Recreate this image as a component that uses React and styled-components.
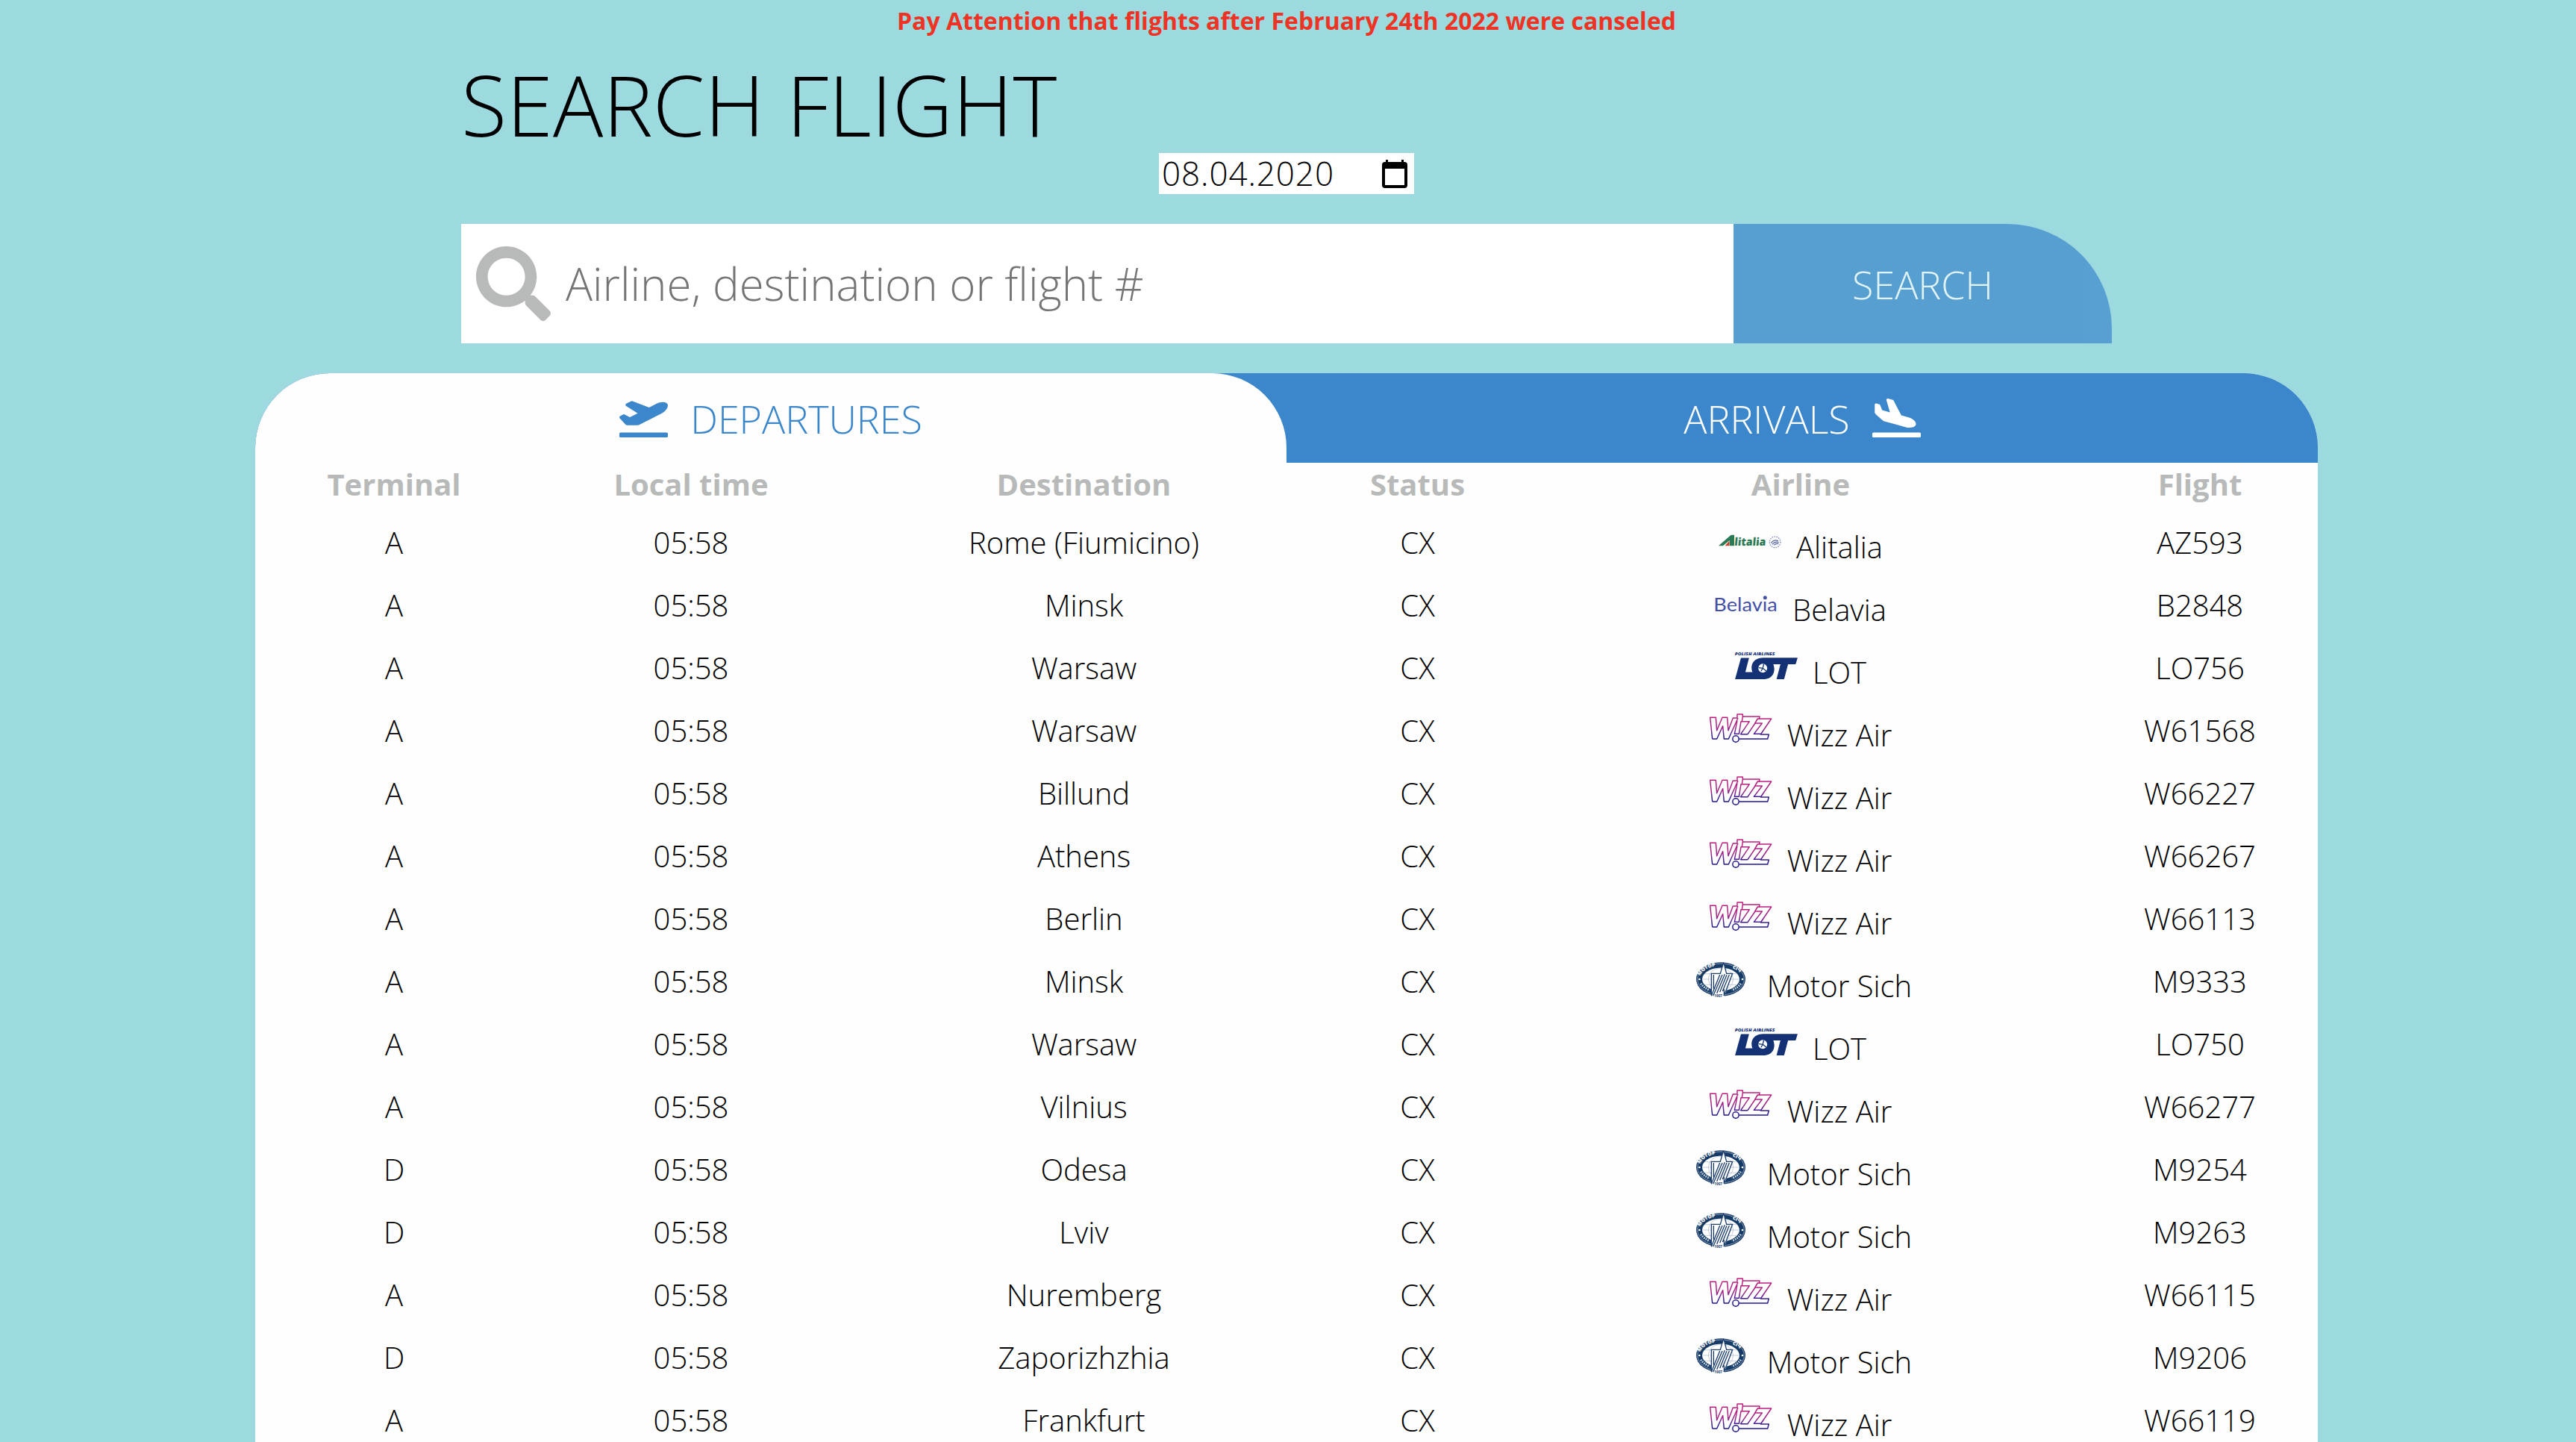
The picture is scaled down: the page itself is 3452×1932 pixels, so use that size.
import React from "react";
import styled, { createGlobalStyle } from "styled-components";
import { FaPlaneArrival, FaPlaneDeparture, FaSearch } from "react-icons/fa";

const GlobalStyle = createGlobalStyle`
  *, *::before, *::after { box-sizing: border-box; }
  body {
    margin: 0;
    background: #9ddae0;
    color: #000;
    font-family: "Open Sans", "Noto Sans", sans-serif;
    font-weight: 300;
  }
`;

const Page = styled.div`
  width: 3448px;
  height: 1932px;
  overflow: hidden;
  display: flex;
  flex-direction: column;
  align-items: center;
`;

const Notice = styled.p`
  margin: 0;
  padding-top: 6px;
  height: 66px;
  flex-shrink: 0;
  color: #ed3424;
  font-size: 32px;
  line-height: 44px;
  font-weight: 700;
  white-space: nowrap;
`;

const SearchSection = styled.section`
  width: 2212px;
  flex-shrink: 0;
  display: flex;
  flex-direction: column;
`;

const Title = styled.h1`
  margin: 0;
  height: 139px;
  font-size: 112px;
  line-height: 147px;
  font-weight: 300;
  white-space: nowrap;
`;

const DateField = styled.div`
  align-self: center;
  width: 342px;
  height: 55px;
  padding: 0 9px 0 4px;
  display: flex;
  align-items: center;
  justify-content: space-between;
  background: #fff;
  font-size: 44px;
  line-height: 55px;
`;

const DateText = styled.span`
  letter-spacing: 0.9px;
`;

const SearchForm = styled.form`
  margin: 40px 0;
  height: 160px;
  display: flex;
`;

const SearchBox = styled.label`
  flex: 1;
  padding-left: 20px;
  display: flex;
  align-items: center;
  gap: 20px;
  background: #fff;
  color: #b8bab9;
`;

const SearchInput = styled.input`
  flex: 1;
  min-width: 0;
  height: 100%;
  padding: 0;
  border: 0;
  outline: 0;
  background: transparent;
  font: 300 60px "Open Sans", sans-serif;
  color: #000;
  &::placeholder { color: #757575; opacity: 1; }
`;

const SearchButton = styled.button`
  width: 507px;
  padding: 0;
  border: 0;
  border-radius: 0 140px 0 0;
  background: #3c87cc;
  color: #fff;
  opacity: 0.7;
  font: 300 52px "Open Sans", sans-serif;
`;

const Board = styled.section`
  width: 2764px;
  flex: 1 0 auto;
  border-radius: 100px 100px 0 0;
  background: #fefefe;
`;

const Tabs = styled.nav`
  height: 120px;
  display: flex;
  border-radius: 100px 100px 0 0;
  overflow: hidden;
  background: #3c87cc;
`;

const Tab = styled.a`
  flex: 1;
  display: flex;
  align-items: center;
  justify-content: center;
  gap: 30px;
  border-radius: 100px 100px 0 0;
  background: ${(p) => (p.$active ? "#fefefe" : "#3c87cc")};
  color: ${(p) => (p.$active ? "#3c87cc" : "#fff")};
  font-size: 52px;
  line-height: 71px;
  svg { width: 65px; height: 52px; }
`;

const Row = styled.div`
  height: ${(p) => (p.$head ? 65 : 84)}px;
  padding: 0 2px 0 4px;
  display: grid;
  grid-template-columns: 364px 432px 621px 273px 754px 316px;
  align-items: center;
  justify-items: center;
  font-size: 40px;
  line-height: 54px;
  white-space: nowrap;
  ${(p) => p.$head && "padding-bottom: 8px; color: #b8bab9; font-weight: 700;"}
`;

const Carrier = styled.div`
  display: flex;
  align-items: center;
  gap: 20px;
  svg { display: block; margin-bottom: 7px; overflow: visible; }
`;

const CarrierName = styled.span`
  padding-top: 12px;
`;

const CalendarIcon = () => (
  <svg width="34" height="38" viewBox="0 0 34 38">
    <path d="M4 3H5V0H8V3H26V0H29V3H30Q34 3 34 7V34Q34 38 30 38H4Q0 38 0 34V7Q0 3 4 3ZM4 12V34H30V12Z" fillRule="evenodd" />
  </svg>
);

const AlitaliaLogo = () => (
  <svg width="84" height="48" viewBox="0 0 252 144">
    <path d="M0 94 50 50H63V94H44V72L18 94Z" fill="#2c7a55" />
    <path d="M26 94 43 74V94Z" fill="#c8402c" />
    <text x="62" y="94" fontFamily="Open Sans" fontSize="44" fontWeight="800" fill="#2c7a55" textLength="126" lengthAdjust="spacingAndGlyphs" transform="translate(9 0) skewX(-5)">litalia</text>
    <circle cx="227" cy="79" r="22" fill="none" stroke="#7885b5" strokeWidth="3.5" strokeDasharray="5 4" />
    <path d="M211 83Q223 67 240 74M215 88Q228 74 242 80M222 91Q232 83 241 86" fill="none" stroke="#5262a3" strokeWidth="3.5" />
  </svg>
);

const BelaviaLogo = () => (
  <svg width="84" height="48" viewBox="0 0 252 144">
    <text x="-5" y="104" fontFamily="Lato" fontSize="73" fontWeight="400" fill="#4450a5" textLength="256" lengthAdjust="spacingAndGlyphs">Belavıa</text>
    <circle cx="202" cy="50" r="7.5" fill="#4450a5" />
  </svg>
);

const LotLogo = () => (
  <svg width="84" height="48" viewBox="192 51 255 146" fill="#133174">
    <text x="191" y="81" fontFamily="Open Sans" fontSize="17" fontWeight="800" fontStyle="italic" textLength="163" lengthAdjust="spacingAndGlyphs">POLISH AIRLINES</text>
    <path d="M216 92H249L234 150H263C252 119 268 92 306 91H447L439 118H408L392 179H361L377 118H348C360 150 344 179 308 179H192Z" />
    <circle cx="305" cy="134" r="18" fill="#fff" />
    <path d="M305 134 309 117M305 134 289 132M305 134 319 145M305 134 298 146" stroke="#133174" strokeWidth="4" />
  </svg>
);

const WizzLogo = () => (
  <svg width="84" height="48" viewBox="92 304 252 144">
    <defs>
      <linearGradient id="wizz" gradientUnits="userSpaceOnUse" x1="0" y1="320" x2="0" y2="430">
        <stop offset="0" stopColor="#c41c7c" />
        <stop offset="0.5" stopColor="#a02486" />
        <stop offset="0.78" stopColor="#2a1c9c" />
        <stop offset="1" stopColor="#14128e" />
      </linearGradient>
    </defs>
    <g fill="none" stroke="url(#wizz)" strokeWidth="4.4" strokeLinejoin="round">
      <path d="M103 418 94 332H117L121 384 143 332H163L167 384 186 334H203V319H225V328H293L291 337H340L297 400H330L325 418H210" />
      <path d="M103 418H121L145 366 150 418H168L206 334" />
      <path d="M203 345 192 398H210L218 348H252L217 399H245L275 355H303L270 398H297" />
      <path d="M225 328 222 348M293 337H285L274 355" />
      <circle cx="197" cy="418" r="12.5" fill="#fff" />
    </g>
  </svg>
);

const MotorSichLogo = () => (
  <svg width="84" height="48" viewBox="66 48 252 144">
    <ellipse cx="192" cy="120" rx="99" ry="68" fill="#163a66" />
    <ellipse cx="192" cy="120" rx="94" ry="63" fill="none" stroke="#b9c6d6" strokeWidth="2" />
    <ellipse cx="192" cy="120" rx="75" ry="46" fill="#fff" />
    <g fill="none" stroke="#a9b7c9" strokeWidth="2">
      <ellipse cx="192" cy="120" rx="50" ry="45" />
      <path d="M118 120H266M128 98H256M128 142H256" />
    </g>
    <path id="motorTop" d="M108 107Q132 66 180 69" fill="none" />
    <path id="sichTop" d="M238 76Q268 86 278 108" fill="none" />
    <g fontFamily="Open Sans" fontSize="20" fontWeight="800" fill="#fff">
      <text textLength="76"><textPath href="#motorTop">МОТОР</textPath></text>
      <text><textPath href="#sichTop">СІЧ</textPath></text>
    </g>
    <circle cx="106" cy="120" r="4" fill="#fff" />
    <circle cx="279" cy="120" r="4" fill="#fff" />
    <path d="M112 137Q122 154 148 164M272 137Q262 154 236 164" fill="none" stroke="#c4d0de" strokeWidth="9" strokeDasharray="5 4" />
    <path d="M204 48 215 98H241L205 191H176L155 191 153 98H191Z" fill="#fff" />
    <path d="M203 52 190 97H154V187L188 102M203 52 215 97H239L205 186V160M163 102V160M161 187 198 102M176 176 208 100M216 102 188 172M226 102 199 168" fill="none" stroke="#1d3f6e" strokeWidth="4" />
    <text x="166" y="191" fontFamily="Open Sans" fontSize="14" fontWeight="700" fill="#163a66">1907</text>
  </svg>
);

const carriers = {
  "Alitalia": AlitaliaLogo,
  "Belavia": BelaviaLogo,
  "LOT": LotLogo,
  "Wizz Air": WizzLogo,
  "Motor Sich": MotorSichLogo,
};

const flights = [
  ["A", "Rome (Fiumicino)", "Alitalia", "AZ593"],
  ["A", "Minsk", "Belavia", "B2848"],
  ["A", "Warsaw", "LOT", "LO756"],
  ["A", "Warsaw", "Wizz Air", "W61568"],
  ["A", "Billund", "Wizz Air", "W66227"],
  ["A", "Athens", "Wizz Air", "W66267"],
  ["A", "Berlin", "Wizz Air", "W66113"],
  ["A", "Minsk", "Motor Sich", "M9333"],
  ["A", "Warsaw", "LOT", "LO750"],
  ["A", "Vilnius", "Wizz Air", "W66277"],
  ["D", "Odesa", "Motor Sich", "M9254"],
  ["D", "Lviv", "Motor Sich", "M9263"],
  ["A", "Nuremberg", "Wizz Air", "W66115"],
  ["D", "Zaporizhzhia", "Motor Sich", "M9206"],
  ["A", "Frankfurt", "Wizz Air", "W66119"],
];

const headings = ["Terminal", "Local time", "Destination", "Status", "Airline", "Flight"];

function FlightRow({ terminal, destination, airline, number }) {
  const Logo = carriers[airline];
  return (
    <Row>
      <span>{terminal}</span>
      <span>05:58</span>
      <span>{destination}</span>
      <span>CX</span>
      <Carrier>
        <Logo />
        <CarrierName>{airline}</CarrierName>
      </Carrier>
      <span>{number}</span>
    </Row>
  );
}

export default function App() {
  return (
    <>
      <GlobalStyle />
      <Page>
        <Notice>Pay Attention that flights after February 24th 2022 were canseled</Notice>
        <SearchSection>
          <Title>SEARCH FLIGHT</Title>
          <DateField>
            <DateText>08.04.2020</DateText>
            <CalendarIcon />
          </DateField>
          <SearchForm>
            <SearchBox>
              <FaSearch size={100} />
              <SearchInput placeholder="Airline, destination or flight #" />
            </SearchBox>
            <SearchButton type="button">SEARCH</SearchButton>
          </SearchForm>
        </SearchSection>
        <Board>
          <Tabs>
            <Tab $active>
              <FaPlaneDeparture />
              DEPARTURES
            </Tab>
            <Tab>
              ARRIVALS
              <FaPlaneArrival />
            </Tab>
          </Tabs>
          <Row $head>
            {headings.map((h) => (
              <span key={h}>{h}</span>
            ))}
          </Row>
          {flights.map(([terminal, destination, airline, number]) => (
            <FlightRow
              key={number}
              terminal={terminal}
              destination={destination}
              airline={airline}
              number={number}
            />
          ))}
        </Board>
      </Page>
    </>
  );
}
